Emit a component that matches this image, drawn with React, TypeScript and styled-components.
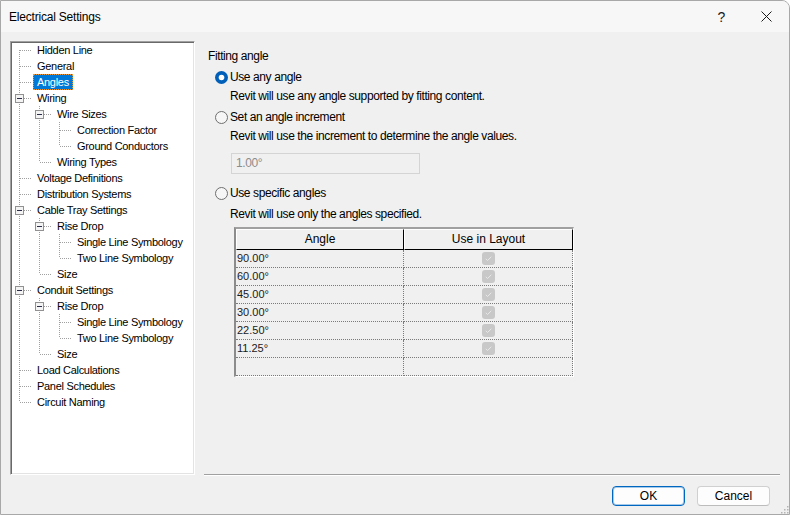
import React from 'react';
import styled, { createGlobalStyle, css } from 'styled-components';

const GlobalStyle = createGlobalStyle`
  html, body {
    margin: 0;
    padding: 0;
    background: #ffffff;
  }
  body {
    font-family: 'Liberation Sans', Arial, sans-serif;
    color: #000;
  }
`;

type TreeItem = {
  label: string;
  level: number;
  expanded?: boolean;
  selected?: boolean;
};

const TREE: TreeItem[] = [
  { label: 'Hidden Line', level: 0 },
  { label: 'General', level: 0 },
  { label: 'Angles', level: 0, selected: true },
  { label: 'Wiring', level: 0, expanded: true },
  { label: 'Wire Sizes', level: 1, expanded: true },
  { label: 'Correction Factor', level: 2 },
  { label: 'Ground Conductors', level: 2 },
  { label: 'Wiring Types', level: 1 },
  { label: 'Voltage Definitions', level: 0 },
  { label: 'Distribution Systems', level: 0 },
  { label: 'Cable Tray Settings', level: 0, expanded: true },
  { label: 'Rise Drop', level: 1, expanded: true },
  { label: 'Single Line Symbology', level: 2 },
  { label: 'Two Line Symbology', level: 2 },
  { label: 'Size', level: 1 },
  { label: 'Conduit Settings', level: 0, expanded: true },
  { label: 'Rise Drop', level: 1, expanded: true },
  { label: 'Single Line Symbology', level: 2 },
  { label: 'Two Line Symbology', level: 2 },
  { label: 'Size', level: 1 },
  { label: 'Load Calculations', level: 0 },
  { label: 'Panel Schedules', level: 0 },
  { label: 'Circuit Naming', level: 0 },
];

const ANGLES = ['90.00°', '60.00°', '45.00°', '30.00°', '22.50°', '11.25°', ''];

// is there a later sibling at this level before the branch closes
function hasNextAt(index: number, level: number) {
  for (let j = index + 1; j < TREE.length; j++) {
    if (TREE[j].level < level) return false;
    if (TREE[j].level === level) return true;
  }
  return false;
}

const LINE = '#a0a0a0';

function Guide(props: {
  own?: boolean;
  bottom?: boolean;
  midStart?: boolean;
  expander?: boolean;
}) {
  const { own, bottom, midStart, expander } = props;
  return (
    <svg width="20" height="16" style={{ display: 'block', flex: 'none' }}>
      {own ? (
        <>
          <line x1="7.5" y1={midStart ? 8 : 0} x2="7.5" y2={bottom ? 16 : 8} stroke={LINE} strokeDasharray="1 1" />
          <line x1="8" y1="8.5" x2="22" y2="8.5" stroke={LINE} strokeDasharray="1 1" />
        </>
      ) : (
        bottom && <line x1="7.5" y1="0" x2="7.5" y2="16" stroke={LINE} strokeDasharray="1 1" />
      )}
      {expander && (
        <g>
          <rect x="3.5" y="4.5" width="8" height="8" fill="#f4f4f4" stroke="#919191" />
          <line x1="5" y1="8.5" x2="10" y2="8.5" stroke="#2b2b4a" />
        </g>
      )}
    </svg>
  );
}

function RadioMark({ checked }: { checked?: boolean }) {
  return (
    <svg width="13" height="13" style={{ display: 'block', flex: 'none' }}>
      {checked ? (
        <>
          <circle cx="6.5" cy="6.5" r="6.5" fill="#005fb8" />
          <circle cx="6.5" cy="6.5" r="2.8" fill="#ffffff" />
        </>
      ) : (
        <circle cx="6.5" cy="6.5" r="6" fill="#f6f6f6" stroke="#6e6e6e" />
      )}
    </svg>
  );
}

function DisabledCheck() {
  return (
    <svg width="13" height="13" style={{ display: 'block' }}>
      <rect x="0" y="0" width="13" height="13" rx="3" fill="#c8c8c8" />
      <path d="M3.8 6.8 L5.6 8.5 L9.3 4.7" fill="none" stroke="#e8e8e8" strokeWidth="1" />
    </svg>
  );
}

export default function App() {
  return (
    <>
      <GlobalStyle />
      <Window>
        <TitleBar>
          <Title>Electrical Settings</Title>
          <CaptionButton>?</CaptionButton>
          <CaptionButton>
            <svg width="11" height="11">
              <path d="M0.5 0.5 L10.5 10.5 M10.5 0.5 L0.5 10.5" stroke="#1a1a1a" strokeWidth="1" />
            </svg>
          </CaptionButton>
        </TitleBar>

        <Main>
          <TreeBox>
            {TREE.map((item, i) => {
              const guides = [];
              for (let k = 0; k < item.level; k++) {
                guides.push(<Guide key={k} bottom={hasNextAt(i, k)} />);
              }
              guides.push(
                <Guide
                  key="own"
                  own
                  bottom={hasNextAt(i, item.level)}
                  midStart={i === 0}
                  expander={item.expanded}
                />
              );
              return (
                <TreeRow key={i}>
                  {guides}
                  <TreeLabel $selected={item.selected}>{item.label}</TreeLabel>
                </TreeRow>
              );
            })}
          </TreeBox>

          <Panel>
            <SectionLabel>Fitting angle</SectionLabel>
            <RadioRow $top={5}>
              <RadioMark checked />
              <span>Use any angle</span>
            </RadioRow>
            <Description $top={3}>Revit will use any angle supported by fitting content.</Description>
            <RadioRow $top={5}>
              <RadioMark />
              <span>Set an angle increment</span>
            </RadioRow>
            <Description $top={3}>Revit will use the increment to determine the angle values.</Description>
            <IncrementBox>1.00°</IncrementBox>
            <RadioRow $top={11}>
              <RadioMark />
              <span>Use specific angles</span>
            </RadioRow>
            <Description $top={5}>Revit will use only the angles specified.</Description>

            <Grid>
              <GridRow>
                <HeaderCell>Angle</HeaderCell>
                <HeaderCell>Use in Layout</HeaderCell>
              </GridRow>
              {ANGLES.map((a, i) => (
                <GridRow key={i}>
                  <Cell>{a}</Cell>
                  <Cell $center>{a && <DisabledCheck />}</Cell>
                </GridRow>
              ))}
            </Grid>

            <Separator />
          </Panel>
        </Main>

        <Footer>
          <DialogButton $primary>OK</DialogButton>
          <DialogButton>Cancel</DialogButton>
        </Footer>

        <Grip width="10" height="10">
          {[
            [8, 2],
            [8, 5],
            [5, 5],
            [8, 8],
            [5, 8],
            [2, 8],
          ].map(([x, y], i) => (
            <rect key={i} x={x} y={y} width="1.5" height="1.5" fill="#b4b4b4" />
          ))}
        </Grip>
      </Window>
    </>
  );
}

const Window = styled.div`
  position: relative;
  width: 790px;
  height: 515px;
  box-sizing: border-box;
  border: 1px solid #a8a8a8;
  border-top-right-radius: 8px;
  background: #f0f0f0;
  display: flex;
  flex-direction: column;
  overflow: hidden;
`;

const TitleBar = styled.div`
  height: 31px;
  flex: none;
  display: flex;
  align-items: center;
  background: #f7f7f7;
  padding-left: 8px;
`;

const Title = styled.div`
  flex: 1;
  font-size: 12px;
  letter-spacing: -0.2px;
  color: #000;
`;

const CaptionButton = styled.div`
  width: 45px;
  height: 31px;
  display: flex;
  align-items: center;
  justify-content: center;
  font-size: 14px;
  color: #1a1a1a;
`;

const Main = styled.div`
  display: flex;
  height: 443px;
  flex: none;
  box-sizing: border-box;
  padding: 9px 9px 0 9px;
`;

const TreeBox = styled.div`
  width: 185px;
  height: 434px;
  flex: none;
  box-sizing: border-box;
  background: #ffffff;
  border-style: solid;
  border-width: 1px;
  border-color: #a0a0a0 #ffffff #ffffff #a0a0a0;
  box-shadow: inset 1px 1px 0 #696969, inset -1px -1px 0 #e3e3e3;
  padding-left: 1px;
  overflow: hidden;
`;

const TreeRow = styled.div`
  display: flex;
  height: 16px;
  align-items: stretch;
`;

const TreeLabel = styled.div<{ $selected?: boolean }>`
  margin-left: 1px;
  padding: 0 3px;
  box-sizing: border-box;
  height: 16px;
  line-height: 15px;
  font-size: 11px;
  letter-spacing: -0.3px;
  white-space: nowrap;
  border: 1px solid transparent;
  ${p =>
    p.$selected &&
    css`
      background: #0078d7;
      color: #ffffff;
      border: 1px dotted #e8973a;
    `}
`;

const Panel = styled.div`
  flex: 1;
  margin-left: 9px;
  display: flex;
  flex-direction: column;
  font-size: 12px;
  letter-spacing: -0.4px;
`;

const SectionLabel = styled.div`
  margin-top: 7px;
  height: 16px;
  line-height: 16px;
  padding-left: 4px;
`;

const RadioRow = styled.div<{ $top: number }>`
  margin-top: ${p => p.$top}px;
  height: 16px;
  display: flex;
  align-items: center;
  gap: 2px;
  padding-left: 11px;
  line-height: 16px;
`;

const Description = styled.div<{ $top: number }>`
  margin-top: ${p => p.$top}px;
  height: 16px;
  line-height: 16px;
  padding-left: 26px;
`;

const IncrementBox = styled.div`
  margin-top: 9px;
  margin-left: 27px;
  width: 189px;
  height: 21px;
  box-sizing: border-box;
  border: 1px solid #d4d4d4;
  background: #f0f0f0;
  color: #8c8c8c;
  padding-left: 4px;
  line-height: 19px;
`;

const Grid = styled.div`
  margin-top: 5px;
  margin-left: 30px;
  width: 340px;
  box-sizing: border-box;
  letter-spacing: 0;
  border-top: 2px solid #a0a0a0;
  border-left: 2px solid #8c8c8c;
  border-right: 1px solid #ffffff;
  border-bottom: 1px solid #ffffff;
`;

const GridRow = styled.div`
  display: grid;
  grid-template-columns: 168px 169px;
`;

const HeaderCell = styled.div`
  height: 21px;
  box-sizing: border-box;
  border-top: 1px solid #ffffff;
  border-left: 1px solid #ffffff;
  border-right: 1px solid #000000;
  border-bottom: 1px solid #000000;
  text-align: center;
  line-height: 19px;
  font-size: 12px;
`;

const Cell = styled.div<{ $center?: boolean }>`
  height: 18px;
  box-sizing: border-box;
  border-right: 1px dotted #7a7a7a;
  border-bottom: 1px dotted #7a7a7a;
  padding-left: 1px;
  font-size: 11px;
  line-height: 17px;
  color: #1a1a1a;
  ${p =>
    p.$center &&
    css`
      display: flex;
      align-items: center;
      justify-content: center;
    `}
`;

const Separator = styled.div`
  margin-top: auto;
  margin-bottom: -1px;
  border-top: 1px solid #a0a0a0;
  border-bottom: 1px solid #ffffff;
`;

const Footer = styled.div`
  flex: 1;
  display: flex;
  justify-content: flex-end;
  align-items: flex-start;
  gap: 12px;
  padding: 11px 19px 0 0;
  letter-spacing: 0;
`;

const DialogButton = styled.div<{ $primary?: boolean }>`
  width: 73px;
  height: 20px;
  box-sizing: border-box;
  border-radius: 4px;
  background: #fdfdfd;
  font-size: 12px;
  line-height: 18px;
  text-align: center;
  border: 1px solid #d0d0d0;
  border-bottom-color: #bcbcbc;
  ${p =>
    p.$primary &&
    css`
      border: 1px solid #0067c0;
      box-shadow: inset 0 0 0 1px rgba(0, 103, 192, 0.35);
    `}
`;

const Grip = styled.svg`
  position: absolute;
  right: 0;
  bottom: 0;
`;
